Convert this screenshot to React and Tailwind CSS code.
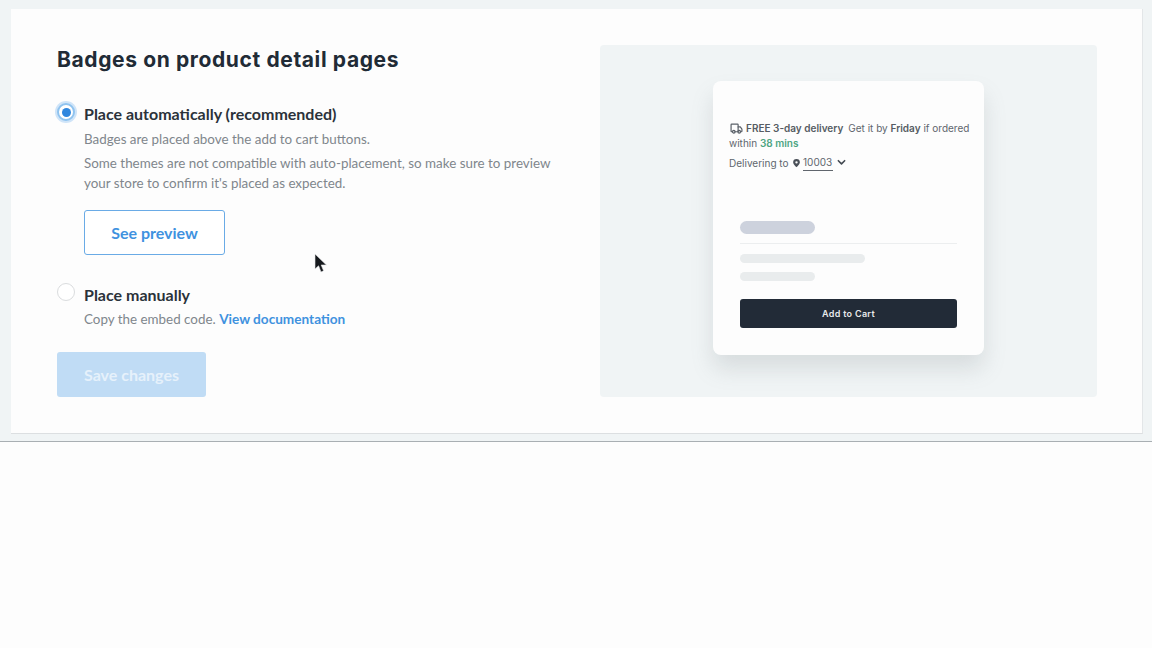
import React from "react";

const lato = { fontFamily: "Lato, sans-serif" };

function Cursor() {
  return (
    <svg className="absolute left-[314px] top-[254px]" width="14" height="22" viewBox="0 0 14 22">
      <path d="M1 0 L1 15 L4.6 11.8 L7 18 L9.6 16.8 L7.2 11 L12.4 11 Z" fill="#16191d" stroke="#e8eaeb" strokeWidth="0.6" />
    </svg>
  );
}

function Truck() {
  return (
    <svg width="13" height="13" viewBox="0 0 24 24" fill="none" stroke="#5a6068" strokeWidth="2.2" strokeLinecap="round" strokeLinejoin="round" className="inline-block align-[-3px] mr-[3px]">
      <path d="M5 18H3a1 1 0 0 1-1-1V5a1 1 0 0 1 1-1h11a1 1 0 0 1 1 1v13H9" />
      <path d="M15 9h4l3 4v4a1 1 0 0 1-1 1h-2" />
      <circle cx="7" cy="18" r="2.4" />
      <circle cx="17" cy="18" r="2.4" />
    </svg>
  );
}

function Pin() {
  return (
    <svg width="9" height="10" viewBox="0 0 24 24" className="inline-block ml-[3px] mr-[2px]">
      <path fillRule="evenodd" fill="#4a5058" d="M12 1a9 9 0 0 0-9 9c0 6 9 13 9 13s9-7 9-13a9 9 0 0 0-9-9zm0 6a3.2 3.2 0 1 1 0 6.400a3.200 3.200 0 0 1 0-6.400z" />
    </svg>
  );
}

function Chevron() {
  return (
    <svg width="9" height="7" viewBox="0 0 10 7" fill="none" stroke="#444a52" strokeWidth="1.8" strokeLinecap="round" strokeLinejoin="round" className="ml-[4px]">
      <path d="M1.500 1.500 5 5l3.500-3.500" />
    </svg>
  );
}

export default function App() {
  return (
    <div className="relative w-[1152px] h-[648px] overflow-hidden bg-[#fdfdfd]" style={lato}>
      <div className="h-[442px] bg-[#f0f4f5] border-b border-b-[#a9afb3] pt-[9px] pl-[11px] pr-[9px]">
        <div className="h-[425px] bg-[#fdfdfd] border-b border-b-[#dcdfe1] border-r border-r-[#e3e6e8] pl-[46px] pr-[45px] pt-[36px] flex justify-between">
          <div className="w-[500px]">
            <h1 className="text-[21px] leading-[30px] font-bold tracking-[0.62px] text-[#212b36] whitespace-nowrap" style={{ fontFamily: "Inter, sans-serif", fontWeight: 700 }}>
              Badges on product detail pages
            </h1>

            <div className="mt-[29px] flex">
              <div className="shrink-0 w-[18px] h-[18px] mt-[-1px] rounded-full bg-white border-[2px] border-[#8fc3ef] shadow-[0_0_0_2px_#cfe4f8] flex items-center justify-center">
                <div className="w-[9px] h-[9px] rounded-full bg-[#2e86de]" />
              </div>
              <div className="ml-[9px]">
                <div className="text-[16px] leading-[20px] font-bold text-[#2b323a] h-[20px]">Place automatically (recommended)</div>
                <p className="mt-[5px] text-[13.400px] leading-[20px] text-[#80868c]">Badges are placed above the add to cart buttons.</p>
                <p className="mt-[4px] text-[13.400px] leading-[20px] text-[#80868c] w-[480px]">
                  Some themes are not compatible with auto-placement, so make sure to preview your store to confirm it's placed as expected.
                </p>
                <button className="mt-[17px] w-[141px] h-[45px] rounded-[3px] bg-white border border-[#6aabe6] text-[16px] font-bold text-[#3f92df]">See preview</button>
              </div>
            </div>

            <div className="mt-[30px] flex">
              <div className="shrink-0 w-[18px] h-[18px] mt-[-2px] rounded-full bg-white border border-[#dadcde]" />
              <div className="ml-[9px]">
                <div className="text-[16px] leading-[20px] font-bold text-[#2b323a]">Place manually</div>
                <p className="mt-[4px] text-[13.400px] leading-[20px] text-[#80868c]">
                  Copy the embed code. <span className="font-bold text-[13.600px] text-[#3f92df]">View documentation</span>
                </p>
              </div>
            </div>

            <button className="mt-[23px] w-[149px] h-[45px] rounded-[3px] bg-[#c0dcf5] text-[16px] font-bold text-[#e6f1fb]">Save changes</button>
          </div>

          <div className="w-[497px] h-[352px] rounded-[4px] bg-[#f0f4f5] flex justify-center pt-[36px]">
            <div className="w-[271px] h-[274px] rounded-[8px] bg-[#fdfdfd] shadow-[0_14px_22px_rgba(120,130,135,0.2)] pt-[39px] pl-[17px] pr-[14px]" style={{ fontFamily: "Inter, sans-serif" }}>
              <p className="text-[10px] leading-[16px] text-[#60666d] whitespace-nowrap">
                <Truck />
                <span className="font-semibold text-[#565c63]">FREE 3-day delivery</span>
                <span className="ml-[5px]">Get it by </span>
                <span className="font-semibold text-[#565c63]">Friday</span> if ordered
              </p>
              <p className="mt-[-1px] ml-[-1px] text-[10px] leading-[16px] text-[#60666d]">
                within <span className="font-semibold text-[#4ea582]">38 mins</span>
              </p>
              <div className="mt-[3px] ml-[-1px] flex items-center text-[10px] leading-[16px] text-[#60666d]">
                <span>Delivering to</span>
                <Pin />
                <span className="border-b border-[#60666d] px-[0.500px] h-[17px]">10003</span>
                <Chevron />
              </div>

              <div className="mt-[50px] ml-[10px] w-[75px] h-[13px] rounded-full bg-[#cdd2dd]" />
              <div className="mt-[9px] ml-[10px] mr-[13px] h-px bg-[#eceeef]" />
              <div className="mt-[10px] ml-[10px] w-[125px] h-[9px] rounded-full bg-[#e9eced]" />
              <div className="mt-[9px] ml-[10px] w-[75px] h-[9px] rounded-full bg-[#e9eced]" />
              <button className="mt-[18px] ml-[10px] w-[217px] h-[29px] rounded-[3px] bg-[#222b37] text-[9px] font-semibold tracking-[0.3px] text-[#e8e9ea]">Add to Cart</button>
            </div>
          </div>
        </div>
      </div>
      <Cursor />
    </div>
  );
}
